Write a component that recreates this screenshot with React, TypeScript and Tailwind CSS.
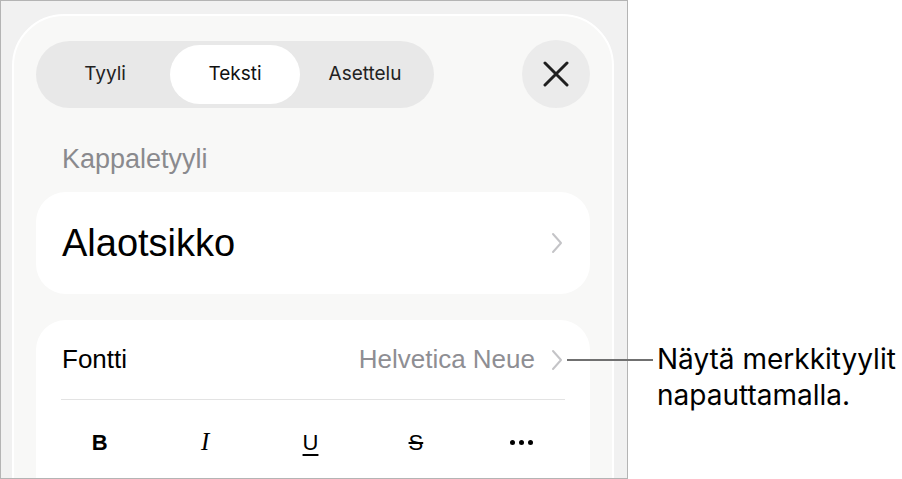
import React from 'react';

function Chevron({ className = '' }: { className?: string }) {
  return (
    <svg width="12" height="22" viewBox="0 0 12 22" className={className} fill="none">
      <path d="M2 2l8 9-8 9" stroke="#c4c4c7" strokeWidth="2" strokeLinecap="round" strokeLinejoin="round" />
    </svg>
  );
}

const tabs = ['Tyyli', 'Teksti', 'Asettelu'];

export default function App() {
  return (
    <div className="relative flex w-[902px] h-[479px] bg-white font-['Inter',sans-serif] text-[#1d1d1f]">
      {/* device frame */}
      <div className="w-[628px] h-[479px] shrink-0 border border-[#b4b4b4] bg-[#f1f1f1] overflow-hidden">
        <div className="ml-[11px] mt-[13px] w-[602px] h-[520px] rounded-[52px] border-2 border-white bg-[#f8f8f7] px-[22px] pt-[24px]">
          <div className="flex items-center justify-between">
            <div className="grid grid-cols-3 w-[398px] h-[67px] rounded-full bg-[#e8e8e8] p-[4px]">
              {tabs.map((t) => (
                <div
                  key={t}
                  className={
                    t === 'Teksti'
                      ? 'flex items-center justify-center rounded-full bg-white text-[19px] text-[#111]'
                      : 'flex items-center justify-center rounded-full text-[19px] text-[#222]'
                  }
                >
                  {t}
                </div>
              ))}
            </div>
            <button className="flex items-center justify-center w-[68px] h-[68px] rounded-full bg-[#ebebeb]">
              <svg width="26" height="26" viewBox="0 0 26 26" fill="none">
                <path d="M2 2l22 22M24 2L2 24" stroke="#1f1f1f" strokeWidth="3" strokeLinecap="round" />
              </svg>
            </button>
          </div>

          <div className="mt-[37px] pl-[26px] font-['Liberation_Sans',Arial,sans-serif] text-[27px] leading-[28px] text-[#8a8a8e]">
            Kappaletyyli
          </div>

          <div className="mt-[19px] flex items-center justify-between h-[102px] rounded-[30px] bg-white pl-[26px] pr-[27px]">
            <span className="font-['Liberation_Sans',Arial,sans-serif] text-[38px] text-black">Alaotsikko</span>
            <Chevron />
          </div>

          <div className="mt-[26px] rounded-[30px] bg-white pb-[40px]">
            <div className="flex items-center justify-between h-[79px] pl-[26px] pr-[27px] font-['Liberation_Sans',Arial,sans-serif] text-[26px]">
              <span className="text-black">Fontti</span>
              <div className="flex items-center gap-[16px]">
                <span className="text-[#8e8e93]">Helvetica Neue</span>
                <Chevron />
              </div>
            </div>
            <div className="mx-[25px] h-px bg-[#e3e3e3]" />
            <div className="ml-[11px] grid grid-cols-5 w-[527px] h-[84px] items-center justify-items-center text-black">
              <span className="font-['Liberation_Sans',Arial,sans-serif] text-[22px] font-bold">B</span>
              <span className="font-['Liberation_Serif',serif] text-[25px] italic">I</span>
              <span className="font-['Liberation_Sans',Arial,sans-serif] text-[22px] underline underline-offset-[4px] decoration-[1.5px]">U</span>
              <span className="font-['Liberation_Sans',Arial,sans-serif] text-[22px] line-through decoration-[1.5px]">S</span>
              <span className="flex gap-[4px]">
                <span className="w-[5px] h-[5px] rounded-full bg-black" />
                <span className="w-[5px] h-[5px] rounded-full bg-black" />
                <span className="w-[5px] h-[5px] rounded-full bg-black" />
              </span>
            </div>
          </div>
        </div>
      </div>

      {/* callout */}
      <div className="absolute left-[567px] top-[359px] w-[86px] h-[2px] bg-[#707070]" />
      <div className="pl-[29px] pt-[341px] text-[28px] leading-[36px] text-black">
        <div>Näytä merkkityylit</div>
        <div>napauttamalla.</div>
      </div>
    </div>
  );
}
